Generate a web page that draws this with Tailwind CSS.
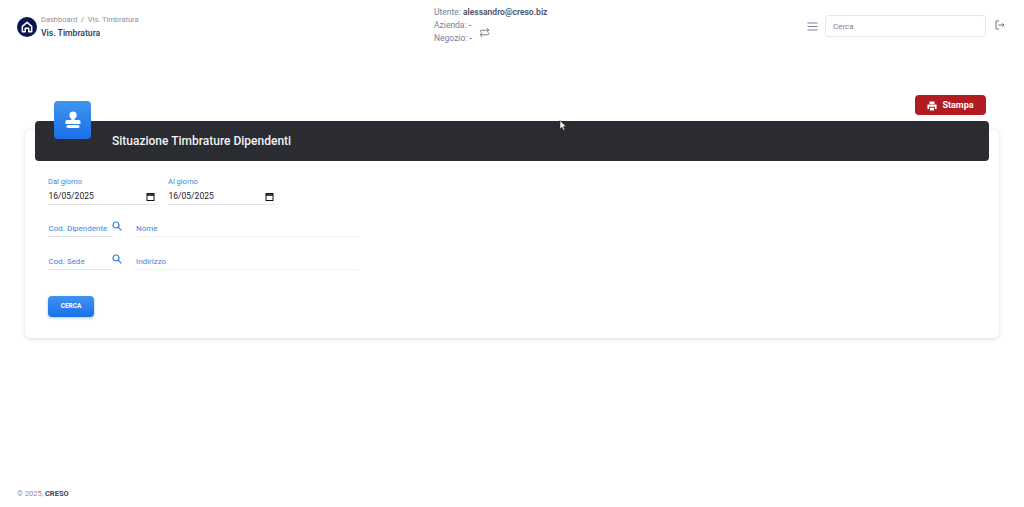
<!DOCTYPE html>
<html lang="it">
<head>
<meta charset="utf-8">
<title>Vis. Timbratura</title>
<script src="https://cdn.jsdelivr.net/npm/@tailwindcss/browser@4"></script>
</head>
<body class="bg-white font-['Roboto',sans-serif]">
<div class="relative h-[507px] overflow-hidden flex flex-col">
    <!-- top bar -->
    <header class="h-[55px] flex items-start shrink-0">
        <div class="w-[434px] pl-[17px] pt-[14px] flex items-start">
            <div class="w-5 h-5 mt-[3px] rounded-full bg-[#0a1450] flex items-center justify-center shrink-0">
                <svg width="14" height="14" viewBox="0 0 24 24" fill="none" stroke="white" stroke-width="2.6" stroke-linecap="round" stroke-linejoin="round">
                    <path d="M4 11l8-7 8 7v9h-5v-6H9v6H4z" />
                </svg>
            </div>
            <div class="ml-1">
                <div class="text-[7.5px] leading-[12px] text-[#8a92a6]">Dashboard&nbsp; /&nbsp; Vis. Timbratura</div>
                <div class="mt-[1px] text-[8.6px] leading-[13px] font-semibold text-[#344767]">Vis. Timbratura</div>
            </div>
        </div>
        <div class="pt-[6px] text-[8.5px] leading-[13px] text-[#7b809a]">
            <div>Utente: <span class="font-semibold text-[#495268]">alessandro@creso.biz</span></div>
            <div class="flex items-center">
                <div>
                    <div>Azienda: <span class="text-[#495268]">-</span></div>
                    <div>Negozio: <span class="text-[#495268]">-</span></div>
                </div>
                <svg class="ml-[7px]" width="11" height="11" viewBox="0 0 24 24" fill="none" stroke="#6b7280" stroke-width="2" stroke-linecap="round" stroke-linejoin="round">
                    <path d="M3 11V9a2 2 0 0 1 2-2h16" /><path d="M18 3l3 4-3 4" /><path d="M21 13v2a2 2 0 0 1-2 2H3" /><path d="M6 21l-3-4 3-4" />
                </svg>
            </div>
        </div>
        <div class="ml-auto flex items-center pt-[15px] pr-[19px]">
            <svg width="11" height="9" viewBox="0 0 11 9" fill="none" stroke="#7b7f95" stroke-width="1.1"><path d="M0.5 1h10M0.5 4.5h10M0.5 8h10" /></svg>
            <div class="ml-[7px] w-[161px] h-[22px] border border-[#e6e8ee] rounded-[3px] pl-[7px] pt-[1px] flex items-center text-[8px] text-[#7b809a]">Cerca</div>
            <svg class="ml-[9px] -mt-[2px]" width="10" height="10" viewBox="0 0 10 10" fill="none" stroke="#6b7280" stroke-width="1"><path d="M4 1H1v8h3M3.5 5h5.5M7.2 3.4L9 5 7.2 6.6" /></svg>
        </div>
    </header>

    <main class="flex-1 flex flex-col">
        <div class="flex justify-end mt-10 pr-[38px]">
            <button class="w-[71px] h-5 pt-[1px] rounded-[4px] bg-[#b01c22] text-white text-[9px] font-bold flex items-center justify-center gap-[5px]">
                <svg width="10" height="10" viewBox="0 0 24 24" fill="white"><path d="M6 1h12v6H6zM1 8.500h22V19h-4v-5H5v5H1zM7 16h10v7H7z" /></svg>
                Stampa
            </button>
        </div>

        <section class="mx-[25px] mt-[15px] h-[208px] bg-white rounded-[5px] shadow-[0_1px_4px_rgba(0,0,0,0.15)]">
            <div class="relative -mt-[9px] mx-[10px] h-10 rounded-[4px] bg-[#2a2c32] pl-[77px] flex items-center text-[12px] font-medium text-[#f1f2f4]">
                <div class="absolute left-[19px] -top-5 w-[37px] h-[38px] rounded-[4px] bg-gradient-to-b from-[#3f94ef] to-[#1a6fe8] flex items-center justify-center">
                    <svg width="18" height="18" viewBox="0 0 18 18" fill="white"><circle cx="9" cy="4.200" r="3.600" /><path d="M7.400 6h3.200V9h4.400a1.500 1.500 0 0 1 1.500 1.500V13H1.500v-2.500A1.500 1.500 0 0 1 3 9h4.400z" /><rect x="2.500" y="14" width="13" height="3" rx="1.500" /></svg>
                </div>
                Situazione Timbrature Dipendenti
            </div>

            <form class="px-[23px] pt-[16px]">
                <div class="flex gap-[12px]">
                    <div class="w-[108px]">
                        <div class="text-[7.5px] leading-[10px] text-[#3f83e0]">Dal giorno</div>
                        <div class="mt-[2px] h-[16px] border-b border-[#e2e4e8] flex items-center justify-between pr-[1px] pl-[0.5px] text-[8.5px] text-[#222]">
                            16/05/2025
                            <svg width="9" height="9" viewBox="0 0 9 9" fill="none" stroke="#111" stroke-width="1"><rect x="1" y="1.500" width="7" height="7" /><path d="M1 3h7" stroke-width="1.600" /></svg>
                        </div>
                    </div>
                    <div class="w-[107px]">
                        <div class="text-[7.5px] leading-[10px] text-[#3f83e0]">Al giorno</div>
                        <div class="mt-[2px] h-[16px] border-b border-[#e2e4e8] flex items-center justify-between pr-[1px] pl-[0.5px] text-[8.5px] text-[#222]">
                            16/05/2025
                            <svg width="9" height="9" viewBox="0 0 9 9" fill="none" stroke="#111" stroke-width="1"><rect x="1" y="1.500" width="7" height="7" /><path d="M1 3h7" stroke-width="1.600" /></svg>
                        </div>
                    </div>
                </div>

                <div class="mt-[16px] flex">
                    <div class="relative w-[65px] h-[16px] border-b border-[#e2e4e8] pl-[0.5px] text-[8px] leading-[16px] text-[#3f83e0]">
                        Cod. Dipendente
                        <svg class="absolute left-[64px] top-0" width="10" height="10" viewBox="0 0 10 10" fill="none" stroke="#2f78de" stroke-width="1.200"><circle cx="4" cy="4" r="3" /><path d="M6.200 6.200L9.300 9.300" /></svg>
                    </div>
                    <div class="ml-[23px] w-[223px] h-[16px] border-b border-[#f0f1f3] text-[8px] leading-[16px] text-[#3f83e0]">Nome</div>
                </div>
                <div class="mt-[17px] flex">
                    <div class="relative w-[65px] h-[16px] border-b border-[#e2e4e8] pl-[0.5px] text-[8px] leading-[16px] text-[#3f83e0]">
                        Cod. Sede
                        <svg class="absolute left-[64px] top-0" width="10" height="10" viewBox="0 0 10 10" fill="none" stroke="#2f78de" stroke-width="1.200"><circle cx="4" cy="4" r="3" /><path d="M6.200 6.200L9.300 9.300" /></svg>
                    </div>
                    <div class="ml-[23px] w-[223px] h-[16px] border-b border-[#f0f1f3] text-[8px] leading-[16px] text-[#3f83e0]">Indirizzo</div>
                </div>

                <button type="button" class="mt-[26px] w-[46px] h-[21px] pt-[1px] rounded-[4px] bg-gradient-to-b from-[#3f94ef] to-[#1a6fe8] shadow-[0_1px_3px_rgba(26,111,232,0.4)] text-white text-[6.5px] font-bold">CERCA</button>
            </form>
        </section>

        <footer class="mt-auto pl-[17px] pb-[8px] text-[7.5px] leading-[10px] text-[#8a92a6]">© 2025, <span class="font-bold text-[#344767]">CRESO</span></footer>
    </main>

    <!-- mouse pointer caught in the screenshot -->
    <svg class="absolute left-[559px] top-[120px]" width="8" height="12" viewBox="0 0 8 12"><path d="M1 0.500v8.500l2-1.800 1.400 3 1.400-.6-1.400-3h2.600z" fill="white" stroke="#222" stroke-width="0.600" /></svg>
</div>
</body>
</html>
